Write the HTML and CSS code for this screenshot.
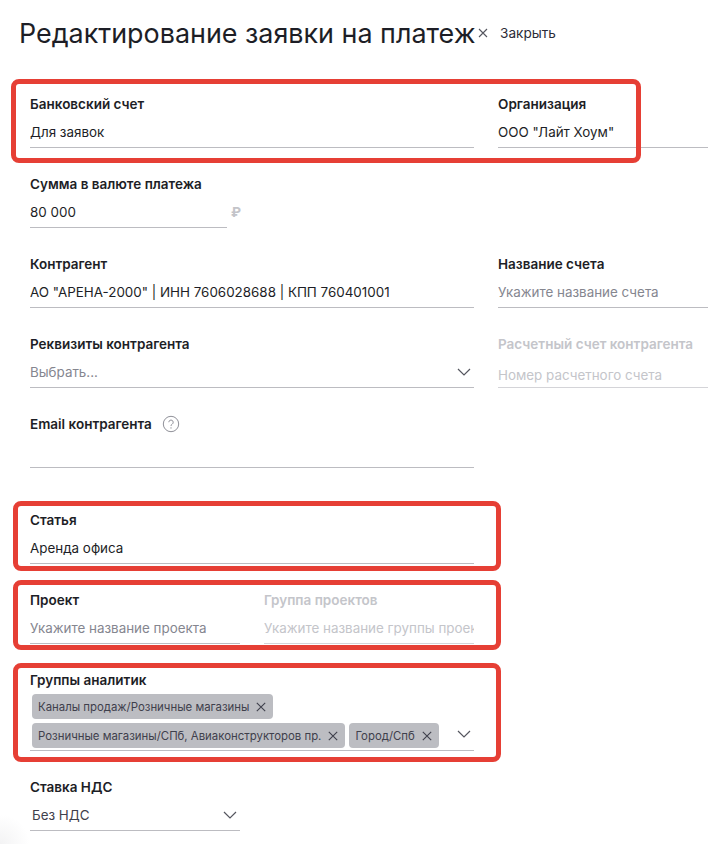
FILE: index.html
```html
<!DOCTYPE html>
<html lang="ru">
<head>
<meta charset="utf-8">
<title>Редактирование заявки на платеж</title>
<link rel="stylesheet" href="styles.css">
</head>
<body>
<div class="page">
  <header class="head">
    <h1 class="title">Редактирование заявки на платеж</h1>
    <button class="close">
      <svg class="close-x" width="10" height="10" viewBox="0 0 10 10"><path d="M1 1l8 8M9 1l-8 8"/></svg>
      <span>Закрыть</span>
    </button>
  </header>

  <div class="row wide first">
    <div class="field"><div class="label">Банковский счет</div><div class="control">Для заявок</div></div>
    <div class="field"><div class="label">Организация</div><div class="control">ООО "Лайт Хоум"</div></div>
  </div>
  <div class="row wide">
    <div class="amount">
      <div class="field"><div class="label">Сумма в валюте платежа</div><div class="control">80 000</div></div>
      <span class="ruble">₽</span>
    </div>
  </div>
  <div class="row wide">
    <div class="field"><div class="label">Контрагент</div><div class="control">АО "АРЕНА-2000" | ИНН 7606028688 | КПП 760401001</div></div>
    <div class="field"><div class="label">Название счета</div><div class="control placeholder">Укажите название счета</div></div>
  </div>
  <div class="row wide">
    <div class="field"><div class="label">Реквизиты контрагента</div><div class="control placeholder select">Выбрать...<svg class="chev" width="14" height="8" viewBox="0 0 14 8"><path d="M1 1l6 6 6-6"/></svg></div></div>
    <div class="field disabled"><div class="label">Расчетный счет контрагента</div><div class="control placeholder low">Номер расчетного счета</div></div>
  </div>
  <div class="row wide gap-big">
    <div class="field">
      <div class="label">Email контрагента
        <svg class="help" width="18" height="18" viewBox="0 0 18 18"><circle cx="9" cy="9" r="7.7"/><path d="M6.8 7.2a2.2 2.2 0 1 1 3.4 1.9c-.8.5-1.2.9-1.2 1.8"/><circle class="dot" cx="9" cy="12.9" r=".7"/></svg>
      </div>
      <div class="control"></div>
    </div>
  </div>
  <div class="narrow">
    <div class="field"><div class="label">Статья</div><div class="control">Аренда офиса</div></div>
    <div class="halves">
      <div class="field"><div class="label">Проект</div><div class="control placeholder">Укажите название проекта</div></div>
      <div class="field disabled"><div class="label">Группа проектов</div><div class="control placeholder clip">Укажите название группы проектов</div></div>
    </div>
    <div class="field">
      <div class="label">Группы аналитик</div>
      <div class="chips">
        <div class="chip-list">
          <span class="chip">Каналы продаж/Розничные магазины<svg class="chip-x" width="10" height="10" viewBox="0 0 10 10"><path d="M.8.8l8.4 8.4M9.2.8L.8 9.2"/></svg></span>
          <span class="chip">Розничные магазины/СПб, Авиаконструкторов пр.<svg class="chip-x" width="10" height="10" viewBox="0 0 10 10"><path d="M.8.8l8.4 8.4M9.2.8L.8 9.2"/></svg></span>
          <span class="chip">Город/Спб<svg class="chip-x" width="10" height="10" viewBox="0 0 10 10"><path d="M.8.8l8.4 8.4M9.2.8L.8 9.2"/></svg></span>
        </div>
        <svg class="chev chev-chips" width="14" height="8" viewBox="0 0 14 8"><path d="M1 1l6 6 6-6"/></svg>
      </div>
    </div>
    <div class="half">
      <div class="field"><div class="label">Ставка НДС</div><div class="control select vat-control">Без НДС<svg class="chev" width="14" height="8" viewBox="0 0 14 8"><path d="M1 1l6 6 6-6"/></svg></div></div>
    </div>
  </div>

  <div class="mark mark-a"></div>
  <div class="mark mark-b"></div>
  <div class="mark mark-c"></div>
  <div class="mark mark-d"></div>
  <div class="corner"></div>
</div>
</body>
</html>
```
FILE: styles.css
```css
* { box-sizing: border-box; }
html, body { margin: 0; height: 100%; background: #fff; overflow: hidden; }
body { font-family: "Inter", "Noto Sans", sans-serif; color: #1d1e26; font-size: 13.5px; }
.page { position: relative; width: 726px; height: 844px; padding-left: 30px; overflow: hidden; }

.head { display: flex; align-items: center; height: 66px; margin-left: -11px; }
.title { margin: 0; font-size: 26.9px; font-weight: 400; line-height: 36px; width: 456px; flex: none; white-space: nowrap; }
.close { display: flex; align-items: center; gap: 12px; margin-left: 3px; padding: 0; border: 0; background: none; font: inherit; font-size: 13.6px; color: #2b2c38; }
.close-x { stroke: #55565f; stroke-width: 1.1; fill: none; }

.row { display: grid; grid-template-columns: 444px 210px; column-gap: 24px; margin-bottom: 28px; }
.first { margin-top: 30px; }
.gap-big { margin-bottom: 44px; }
.amount { display: flex; width: 210px; }
.amount .field { width: 197px; flex: none; }
.ruble { margin: 24px 0 0 4px; color: #c3c4c9; font-weight: 700; font-size: 13.5px; line-height: 24px; }

.label { font-size: 13.5px; font-weight: 600; line-height: 16px; height: 16px; display: flex; align-items: center; white-space: nowrap; }
.control { height: 28px; margin-top: 8px; line-height: 24px; border-bottom: 1px solid #bcbcc1; white-space: nowrap; overflow: hidden; font-size: 13.4px; color: #1d1e26; }
.placeholder { color: #85868f; }
.select { display: flex; align-items: flex-start; justify-content: space-between; padding-right: 3px; }
.chev { fill: none; stroke: #55565f; stroke-width: 1.2; flex: none; margin-top: 8px; }
.help { margin-left: 10px; fill: none; stroke: #8f9098; stroke-width: 1; }
.help .dot { fill: #8f9098; stroke: none; }
.disabled .label { color: #c4c5ca; }
.low { color: #c4c5ca; border-bottom-color: #d4d4d8; line-height: 30px; }
.disabled .clip { color: #c4c5ca; border-bottom-color: #d4d4d8; }

.narrow { width: 444px; display: flex; flex-direction: column; gap: 28px; }
.halves { display: grid; grid-template-columns: 210px 210px; column-gap: 24px; }
.half { width: 210px; }
.vat-control { padding-left: 2px; color: #3f404c; }

.chips { display: flex; justify-content: space-between; align-items: flex-end; margin-top: 6px; padding: 0 3px 2px 2px; border-bottom: 1px solid #bcbcc1; }
.chip-list { display: flex; flex-wrap: wrap; gap: 4px; width: 420px; }
.chip { display: inline-flex; align-items: center; height: 25px; padding: 0 7px 0 6px; background: #bcbdc2; border-radius: 4px; font-size: 11.4px; color: #3f404c; white-space: nowrap; }
.chip-x { margin-left: 7px; stroke: #3f404c; stroke-width: 1.1; fill: none; }
.chev-chips { margin: 0 0 10px 0; }

.mark { position: absolute; border: 5px solid #e63f35; border-radius: 8px; pointer-events: none; }
.mark-a { left: 11px; top: 79px; width: 630px; height: 84px; }
.mark-b { left: 13px; top: 501px; width: 488px; height: 70px; }
.mark-c { left: 13px; top: 580px; width: 488px; height: 70px; }
.mark-d { left: 13px; top: 663px; width: 488px; height: 99px; }
.corner { position: absolute; left: -30px; bottom: -30px; width: 60px; height: 60px; border-radius: 50%; background: radial-gradient(circle, rgba(200,200,205,.22), rgba(255,255,255,0) 70%); }
```
